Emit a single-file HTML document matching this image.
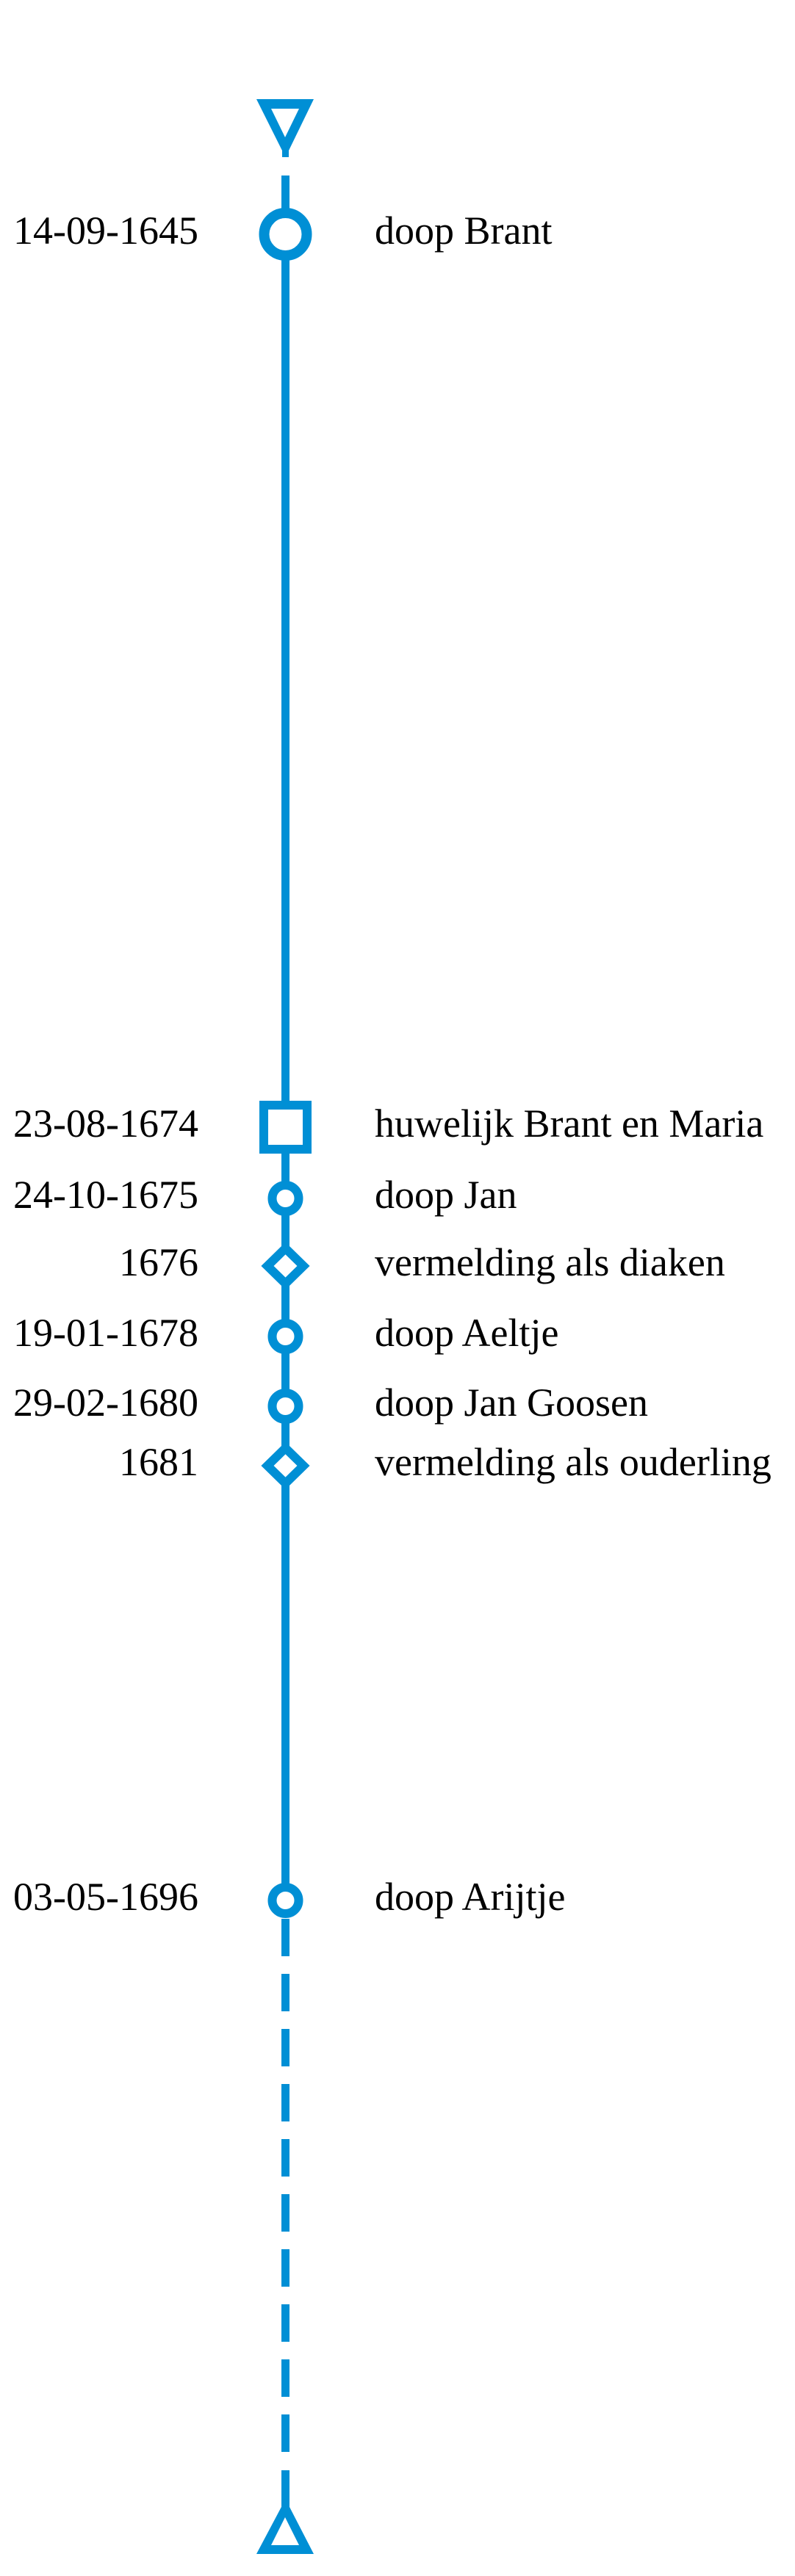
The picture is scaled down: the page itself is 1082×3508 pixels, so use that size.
<!DOCTYPE html>
<html><head><meta charset="utf-8"><style>
html,body{margin:0;padding:0;background:#fff;}
body{width:1082px;height:3508px;overflow:hidden;position:relative;}
svg{position:absolute;left:0;top:0;}
text{font-family:"Liberation Serif",serif;font-size:54px;fill:#000;}
.d{text-anchor:end;}
</style></head><body>
<svg width="1082" height="3508" viewBox="0 0 1082 3508">
<g fill="#008fd5" stroke="none">
<path fill-rule="evenodd" d="M349 135 L427 135 L393 205 L393 214 L384 214 L384 205 Z M369 148 L407 148 L388 187 Z"/>
<rect x="383" y="239" width="11" height="2349"/>
<rect x="383" y="2613" width="11" height="51"/>
<rect x="383" y="2688" width="11" height="51"/>
<rect x="383" y="2763" width="11" height="51"/>
<rect x="383" y="2838" width="11" height="51"/>
<rect x="383" y="2913" width="11" height="51"/>
<rect x="383" y="2988" width="11" height="51"/>
<rect x="383" y="3063" width="11" height="51"/>
<rect x="383" y="3138" width="11" height="51"/>
<rect x="383" y="3213" width="11" height="51"/>
<rect x="383" y="3288" width="11" height="51"/>
<rect x="383" y="3364" width="11" height="52"/>
<path fill-rule="evenodd" d="M384 3412 L393 3412 L427 3478 L349 3478 Z M388 3428 L407 3466 L369 3466 Z"/>
</g>
<g fill="#fff" stroke="#008fd5">
<circle cx="388.5" cy="319" r="29" stroke-width="14"/>
<rect x="359" y="1505" width="59" height="60" stroke-width="12"/>
<circle cx="388.5" cy="1632" r="18" stroke-width="12"/>
<path d="M388.5 1700 L413 1724 L388.5 1748 L364 1724 Z" stroke-width="12"/>
<circle cx="388.5" cy="1820" r="18" stroke-width="12"/>
<circle cx="388.5" cy="1915" r="18" stroke-width="12"/>
<path d="M388.5 1972 L413 1996 L388.5 2020 L364 1996 Z" stroke-width="12"/>
<circle cx="388.5" cy="2588" r="18" stroke-width="12"/>
</g>
<text class="d" x="270" y="332">14-09-1645</text><text x="510" y="332">doop Brant</text>
<text class="d" x="270" y="1548">23-08-1674</text><text x="510" y="1548">huwelijk Brant en Maria</text>
<text class="d" x="270" y="1645">24-10-1675</text><text x="510" y="1645">doop Jan</text>
<text class="d" x="270" y="1737">1676</text><text x="510" y="1737">vermelding als diaken</text>
<text class="d" x="270" y="1833">19-01-1678</text><text x="510" y="1833">doop Aeltje</text>
<text class="d" x="270" y="1928">29-02-1680</text><text x="510" y="1928">doop Jan Goosen</text>
<text class="d" x="270" y="2009">1681</text><text x="510" y="2009">vermelding als ouderling</text>
<text class="d" x="270" y="2601">03-05-1696</text><text x="510" y="2601">doop Arijtje</text>
</svg>
</body></html>
